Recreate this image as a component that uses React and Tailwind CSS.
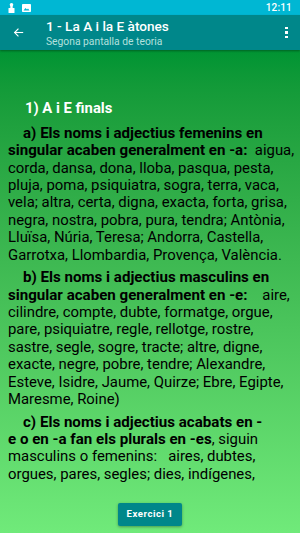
import React from 'react';

const StatusBar = () => (
    <div className="h-[15px] bg-[#00b7d3] flex items-center px-[8px] shrink-0">
        {/* person-ish notification icon */}
        <svg width="7" height="10" viewBox="0 0 7 10" className="mr-[7px]">
            <circle cx="3.5" cy="1.8" r="1.8" fill="#fff" />
            <rect x="2.3" y="3" width="2.4" height="2" fill="#fff" />
            <rect x="0.5" y="5" width="6" height="5" rx="0.5" fill="#fff" />
        </svg>
        {/* image notification icon */}
        <svg width="9" height="8" viewBox="0 0 9 8">
            <rect x="0" y="0" width="9" height="8" rx="0.8" fill="#fff" />
            <path d="M1.5 6.5 L3.5 4 L5 5.5 L6 4.5 L7.5 6.5 Z" fill="#00b7d3" />
        </svg>
        <div className="flex-1" />
        <span className="text-[10px] font-medium text-white leading-none tracking-[0.2px]">12:11</span>
    </div>
);

const Toolbar = () => (
    <div className="h-[35px] bg-[#00878a] flex items-center shrink-0 shadow-[0_1px_2px_rgba(0,0,0,0.35)] relative z-10">
        <div className="w-[46px] flex items-center justify-center pr-[10px]">
            <svg width="11" height="11" viewBox="0 0 24 24" fill="none" stroke="#fff" strokeWidth="2.4" strokeLinecap="square">
                <path d="M21 12H4" />
                <path d="M11 4.5L3.5 12L11 19.5" />
            </svg>
        </div>
        <div className="flex-1 flex flex-col pt-[1px]">
            <span className="text-[13.6px] font-medium text-white leading-[16px]">1 - La A i la E àtones</span>
            <span className="text-[10.3px] text-[#b3e0dd] leading-[13px] mt-[1px]">Segona pantalla de teoria</span>
        </div>
        <div className="w-[28px] flex flex-col items-center gap-[2px] pl-[1px]">
            <span className="w-[2.5px] h-[2.5px] bg-white" />
            <span className="w-[2.5px] h-[2.5px] bg-white" />
            <span className="w-[2.5px] h-[2.5px] bg-white" />
        </div>
    </div>
);

// each entry is one rendered line, as wrapped on the device
const Para = ({ lines, className = '' }) => (
    <p className={`whitespace-pre ${className}`}>
        {lines.map((l, i) => (
            <React.Fragment key={i}>
                {l}
                {i < lines.length - 1 && <br />}
            </React.Fragment>
        ))}
    </p>
);

const B = ({ children }) => <b className="text-[15.1px]">{children}</b>;

export default function App() {
    return (
        <div className="w-[300px] h-[533px] flex flex-col overflow-hidden font-['Roboto',sans-serif]">
            <StatusBar />
            <Toolbar />
            <div className="flex-1 flex flex-col bg-gradient-to-b from-[#009433] to-[#70ea7a] min-h-0">
                <div className="flex-1 overflow-hidden min-h-0 pl-[8px] text-[14.9px] leading-[17.4px] text-black">
                    <h2 className="text-[14.8px] font-bold text-white mt-[50px] ml-[17px] leading-[17px]">1) A i E finals</h2>
                    <Para className="mt-[7.8px]" lines={[
                        <B>{'    a) Els noms i adjectius femenins en'}</B>,
                        <><B>{'singular acaben generalment en -a:'}</B>{'  aigua,'}</>,
                        'corda, dansa, dona, lloba, pasqua, pesta,',
                        'pluja, poma, psiquiatra, sogra, terra, vaca,',
                        'vela; altra, certa, digna, exacta, forta, grisa,',
                        'negra, nostra, pobra, pura, tendra; Antònia,',
                        'Lluïsa, Núria, Teresa; Andorra, Castella,',
                        'Garrotxa, Llombardia, Provença, València.',
                    ]} />
                    <Para className="mt-[5.2px]" lines={[
                        <B>{'    b) Els noms i adjectius masculins en'}</B>,
                        <><B>{'singular acaben generalment en -e:'}</B>{'    aire,'}</>,
                        'cilindre, compte, dubte, formatge, orgue,',
                        'pare, psiquiatre, regle, rellotge, rostre,',
                        'sastre, segle, sogre, tracte; altre, digne,',
                        'exacte, negre, pobre, tendre; Alexandre,',
                        'Esteve, Isidre, Jaume, Quirze; Ebre, Egipte,',
                        'Maresme, Roine)',
                    ]} />
                    <Para className="mt-[5.2px]" lines={[
                        <B>{'    c) Els noms i adjectius acabats en -'}</B>,
                        <><B>{'e o en -a fan els plurals en -es'}</B>{', siguin'}</>,
                        'masculins o femenins:   aires, dubtes,',
                        'orgues, pares, segles; dies, indígenes,',
                        'bastides, cases, forces, germanes, nenes,',
                        'terres.',
                    ]} />
                </div>
                <div className="h-[50.5px] shrink-0 flex justify-center pt-[20.5px]">
                    <button className="h-[23px] px-[9px] bg-[#00878a] text-white text-[9.6px] font-bold tracking-[0.5px] rounded-[2px] shadow-[0_1px_3px_rgba(0,0,0,0.35)]">
                        Exercici 1
                    </button>
                </div>
            </div>
        </div>
    );
}
